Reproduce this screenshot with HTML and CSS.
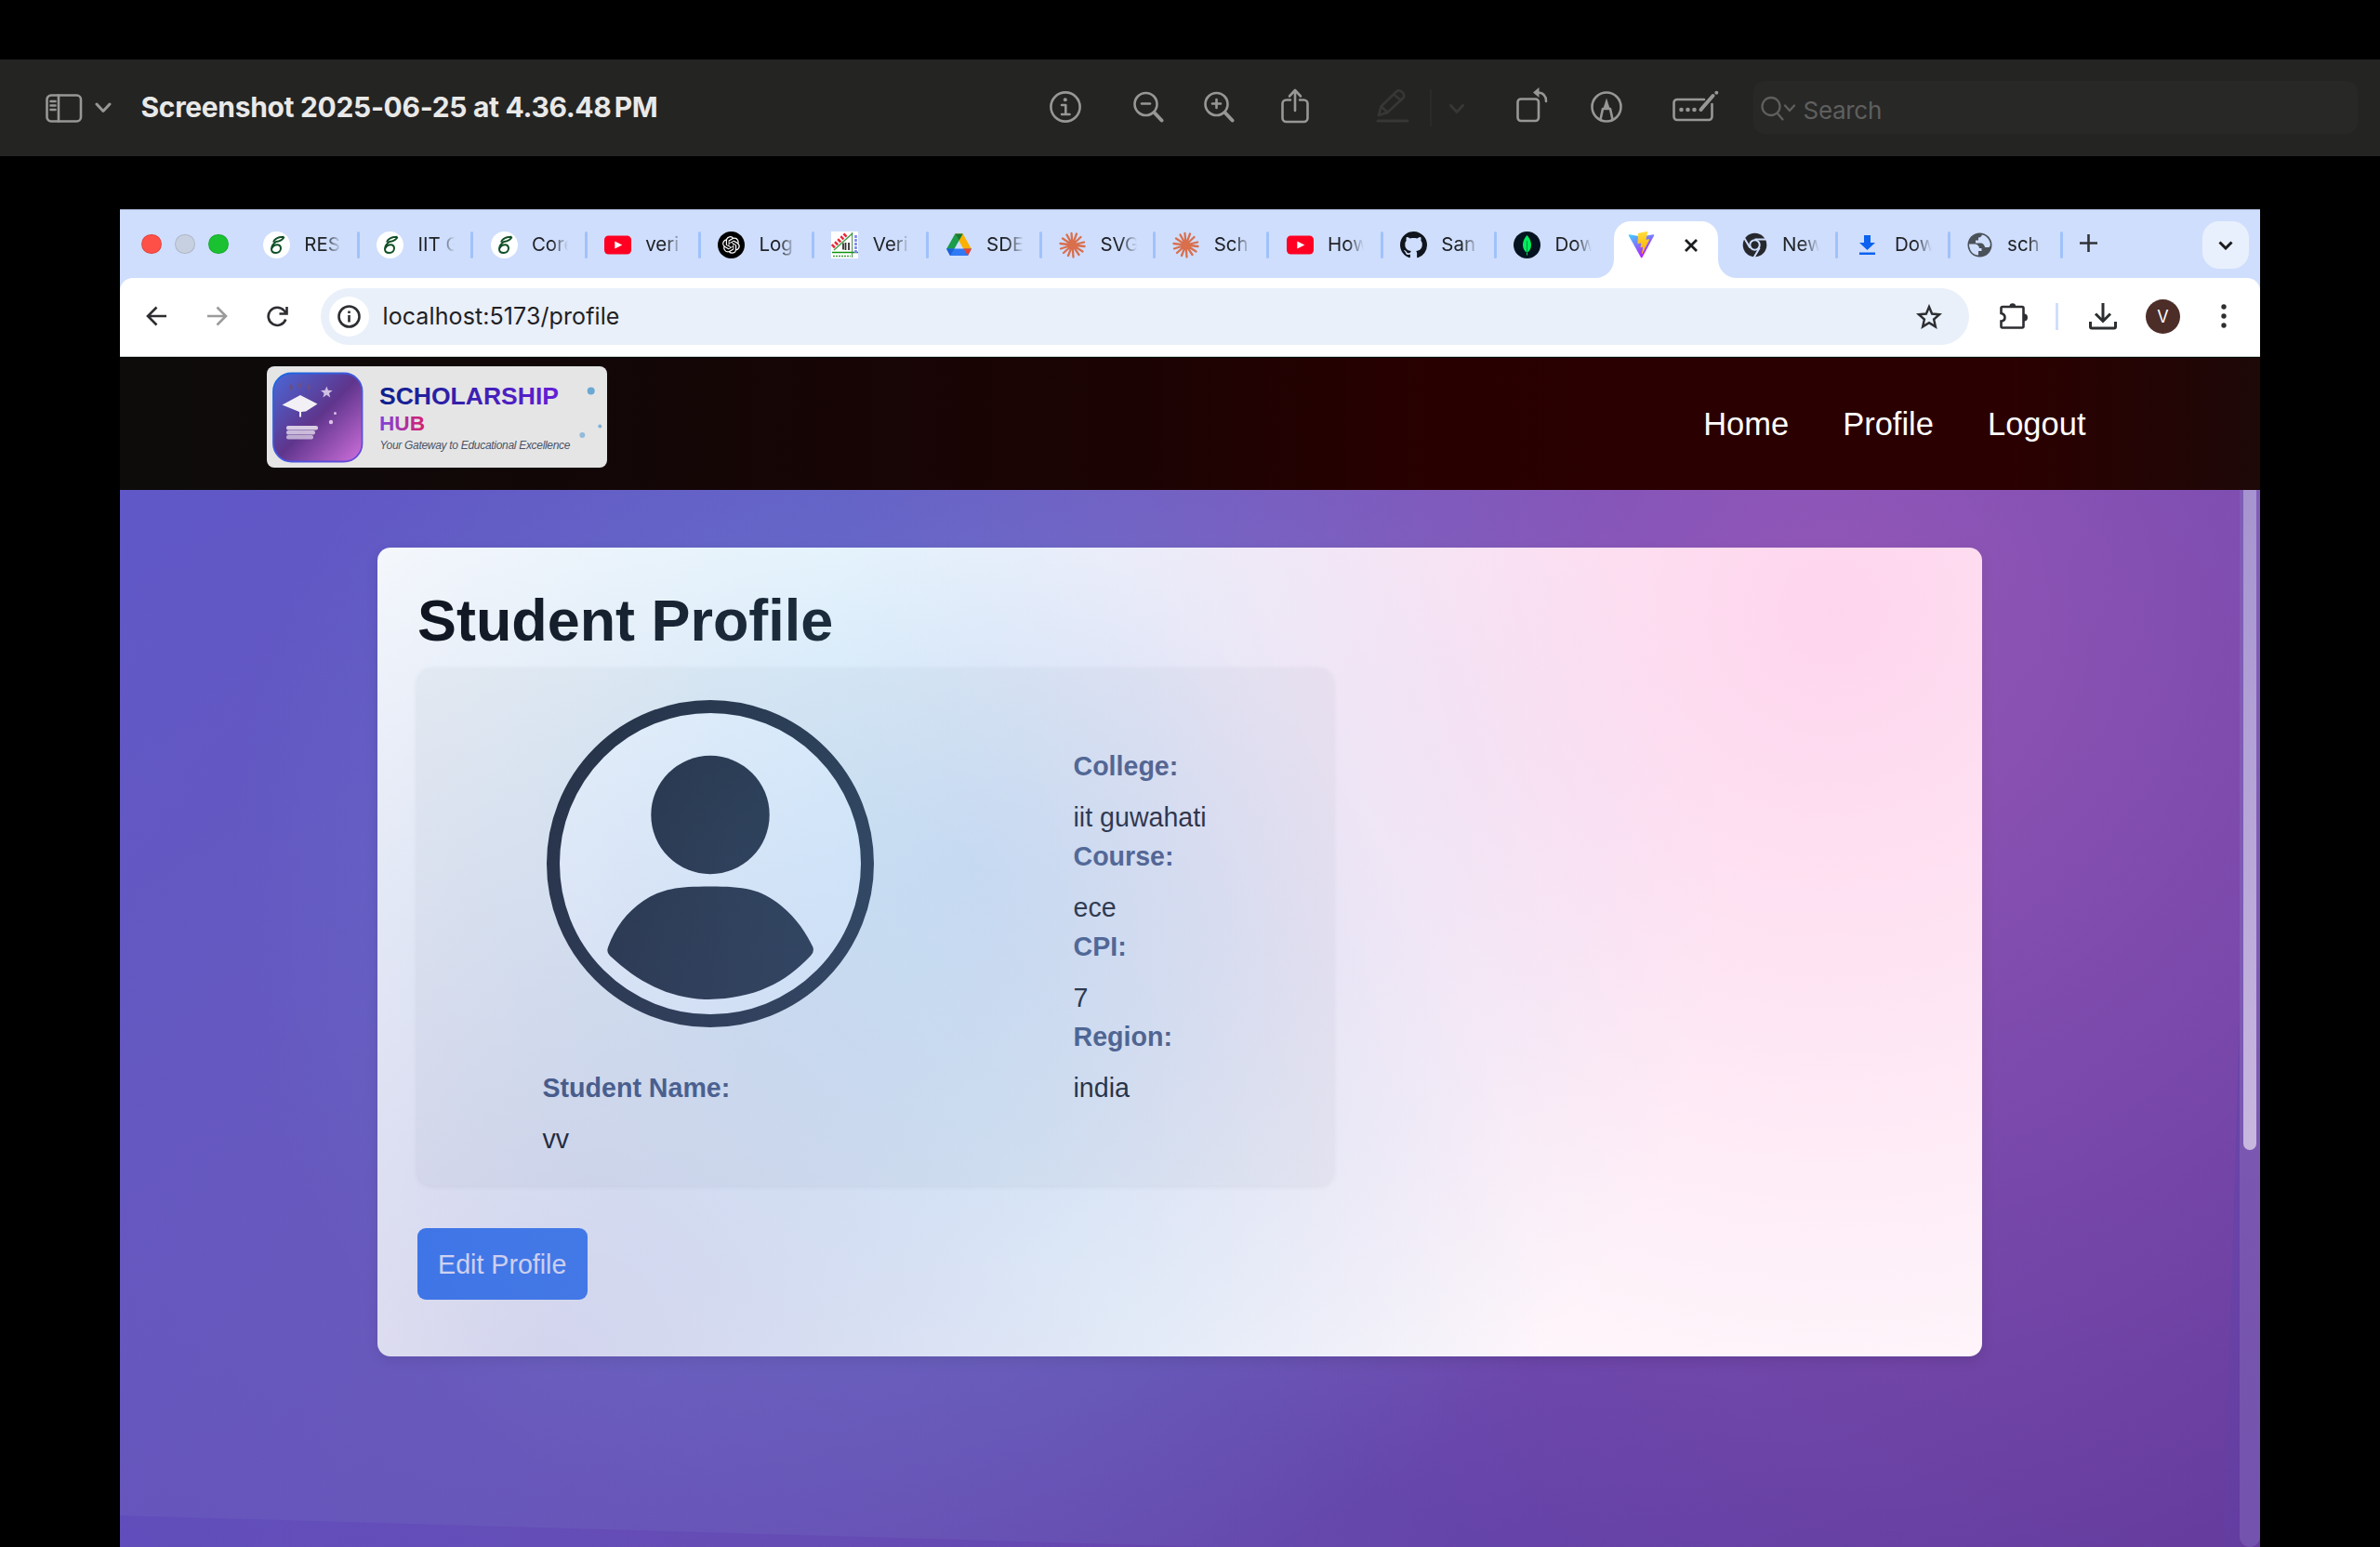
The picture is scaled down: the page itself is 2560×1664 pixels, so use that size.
FILE: index.html
```html
<!DOCTYPE html>
<html lang="en">
<head>
<meta charset="utf-8">
<title>Student Profile</title>
<link rel="stylesheet" href="styles.css">
</head>
<body>
<svg class="defs" width="0" height="0" aria-hidden="true">
  <defs>
    <symbol id="leaf" viewBox="0 0 29 29"><circle cx="14.500" cy="14.500" r="14.500" fill="#fff"/><path d="M22.500 5.800C21 9.500 17.500 10.500 14 11c-3 2-5 4.500-5 7.700 0 2.800 2 4.300 4.700 4.300 3.300 0 5.300-2.300 5.300-4.900 0-2.300-1.600-3.900-3.700-3.900-2.700 0-4.800 1.600-5.800 3.800M11 11.500c1.500-4 5.500-5.700 11.500-5.700" fill="none" stroke="#0f4f26" stroke-width="2"/></symbol>
    <symbol id="yt" viewBox="0 0 29 29"><rect y="4.500" width="29" height="20" rx="4.500" fill="#ff0022"/><path d="M11.300 10.500l8 4-8 4z" fill="#fff"/></symbol>
    <symbol id="burst" viewBox="0 0 29 29"><g stroke="#d96f4c" stroke-width="2.300" stroke-linecap="round"><path d="M14.500 14.500L13.500 2M14.500 14.500L19 2.500M14.500 14.500L23.500 6M14.500 14.500L27 11.500M14.500 14.500L27.500 16M14.500 14.500L25.500 21.500M14.500 14.500L21.500 25M14.500 14.500L15.500 27.500M14.500 14.500L10 26M14.500 14.500L5 23M14.500 14.500L2 18.500M14.500 14.500L1.500 13M14.500 14.500L4 7.500M14.500 14.500L8.500 3.500"/></g><circle cx="14.500" cy="14.500" r="4" fill="#d96f4c"/></symbol>
  </defs>
</svg>

<header class="preview-bar">
  <svg class="ic i-side" width="40" height="31" viewBox="0 0 40 31"><rect x="1.500" y="1.500" width="36.500" height="28" rx="4.500"/><path d="M14 1.500v28M5.500 8h5M5.500 12.500h5M5.500 17h5"/></svg>
  <svg class="ic i-side-chev" width="18" height="12" viewBox="0 0 18 12"><path d="M2 2l7 7.500L16 2" stroke-width="3"/></svg>
  <h1 class="preview-title">Screenshot 2025-06-25 at 4.36.48<span class="thin"> </span>PM</h1>
  <svg class="ic i-info" width="34" height="34" viewBox="0 0 34 34"><circle cx="17" cy="17" r="15.600"/><path d="M13 15h4.300v10M13 25h8.500"/><circle cx="16.800" cy="9.300" r="2" class="solid"/></svg>
  <svg class="ic i-zout" width="34" height="34" viewBox="0 0 34 34"><circle cx="13.500" cy="14" r="12"/><path d="M9 13.500h9"/><path d="M22.500 23l8 8.500" stroke-width="4"/></svg>
  <svg class="ic i-zin" width="34" height="34" viewBox="0 0 34 34"><circle cx="13.500" cy="14" r="12"/><path d="M9 13.500h9M13.500 9v9"/><path d="M22.500 23l8 8.500" stroke-width="4"/></svg>
  <svg class="ic i-share" width="30" height="38" viewBox="0 0 30 38"><path d="M10 12.500H5.500a4 4 0 0 0-4 4V32a4 4 0 0 0 4 4h19a4 4 0 0 0 4-4V16.500a4 4 0 0 0-4-4H20M15 24V2.500M9 8.500l6-6.500 6 6.500"/></svg>
  <svg class="ic dim i-pen" width="36" height="37" viewBox="0 0 36 37"><path d="M3 29l2.500-9.500L21.500 4q2.500-3 6-.5t2.500 6L12.500 26zM19 6.500l8 6.500M5.500 19.500l7 6.500"/><path d="M2 35h32" stroke-width="3"/></svg>
  <span class="bar-rule"></span>
  <svg class="ic dim i-pen-chev" width="16" height="11" viewBox="0 0 16 11"><path d="M1.500 1.500L8 8.500l6.500-7" stroke-width="3"/></svg>
  <svg class="ic i-rot" width="34" height="38" viewBox="0 0 34 38"><rect x="1.500" y="12.500" width="22.500" height="23.500" rx="3.500"/><path d="M32 15c0-6-3-9-8-9.500"/><path d="M24.500 0v11L18 5.500z" class="solid"/></svg>
  <svg class="ic i-mark" width="34" height="34" viewBox="0 0 34 34"><circle cx="17" cy="17" r="15.500"/><path d="M10.500 30.500L13 19h8l2.500 11.500"/><path d="M17 7.500L13 20h8z" class="solid"/></svg>
  <svg class="ic i-form" width="50" height="34" viewBox="0 0 50 34"><path d="M34 10H5a3.500 3.500 0 0 0-3.500 3.500v15A3.500 3.500 0 0 0 5 32h34a3.500 3.500 0 0 0 3.500-3.500V15"/><path d="M43.500 6L33 18l-2.500 3" stroke-width="4"/><circle cx="47.300" cy="2.700" r="2" class="solid"/><circle cx="9.500" cy="21" r="2.300" class="solid"/><circle cx="16.500" cy="21" r="2.300" class="solid"/><circle cx="23.500" cy="21" r="2.300" class="solid"/></svg>
  <div class="search">
    <svg class="ic" width="38" height="28" viewBox="0 0 38 28"><circle cx="11" cy="11.500" r="9.500"/><path d="M17.500 18.500l6 7M26 10.500l5 5.500 5-5.500"/></svg>
    <span>Search</span>
  </div>
</header>

<main class="window">
  <div class="tabs">
    <div class="lights"><i class="red"></i><i class="grey"></i><i class="green"></i></div>
    <div class="tab"><svg><use href="#leaf"/></svg><span>RES</span><b></b></div>
    <div class="tab"><svg><use href="#leaf"/></svg><span>IIT G</span><b></b></div>
    <div class="tab"><svg><use href="#leaf"/></svg><span>Core</span><b></b></div>
    <div class="tab"><svg><use href="#yt"/></svg><span>veri</span><b></b></div>
    <div class="tab"><svg viewBox="0 0 29 29"><circle cx="14.500" cy="14.500" r="14.500"/><path transform="translate(5.100 5.100) scale(.78)" fill="#fff" d="M22.2819 9.8211a5.9847 5.9847 0 0 0-.5157-4.9108 6.0462 6.0462 0 0 0-6.5098-2.9A6.0651 6.0651 0 0 0 4.9807 4.1818a5.9847 5.9847 0 0 0-3.9977 2.9 6.0462 6.0462 0 0 0 .7427 7.0966 5.98 5.98 0 0 0 .511 4.9107 6.051 6.051 0 0 0 6.5146 2.9001A5.9847 5.9847 0 0 0 13.2599 24a6.0557 6.0557 0 0 0 5.7718-4.2058 5.9894 5.9894 0 0 0 3.9977-2.9001 6.0557 6.0557 0 0 0-.7475-7.0729zm-9.022 12.6081a4.4755 4.4755 0 0 1-2.8764-1.0408l.1419-.0804 4.7783-2.7582a.7948.7948 0 0 0 .3927-.6813v-6.7369l2.02 1.1686a.071.071 0 0 1 .038.052v5.5826a4.504 4.504 0 0 1-4.4945 4.4944zm-9.6607-4.1254a4.4708 4.4708 0 0 1-.5346-3.0137l.142.0852 4.783 2.7582a.7712.7712 0 0 0 .7806 0l5.8428-3.3685v2.3324a.0804.0804 0 0 1-.0332.0615L9.74 19.9502a4.4992 4.4992 0 0 1-6.1408-1.6464zM2.3408 7.8956a4.485 4.485 0 0 1 2.3655-1.9728V11.6a.7664.7664 0 0 0 .3879.6765l5.8144 3.3543-2.0201 1.1685a.0757.0757 0 0 1-.071 0l-4.8303-2.7865A4.504 4.504 0 0 1 2.3408 7.872zm16.5963 3.8558L13.1038 8.364 15.1192 7.2a.0757.0757 0 0 1 .071 0l4.8303 2.7913a4.4944 4.4944 0 0 1-.6765 8.1042v-5.6772a.79.79 0 0 0-.407-.667zm2.0107-3.0231l-.142-.0852-4.7735-2.7818a.7759.7759 0 0 0-.7854 0L9.409 9.2297V6.8974a.0662.0662 0 0 1 .0284-.0615l4.8303-2.7866a4.4992 4.4992 0 0 1 6.6802 4.66zM8.3065 12.863l-2.02-1.1638a.0804.0804 0 0 1-.038-.0567V6.0742a4.4992 4.4992 0 0 1 7.3757-3.4537l-.142.0805L8.704 5.459a.7948.7948 0 0 0-.3927.6813zm1.0976-2.3654l2.602-1.4998 2.6069 1.4998v2.9994l-2.5974 1.4997-2.6067-1.4997Z"/></svg><span>Log</span><b></b></div>
    <div class="tab"><svg viewBox="0 0 29 29"><rect width="29" height="29" fill="#fff"/><path d="M3 20L23 2" stroke="#4aa04a" stroke-width="1.500"/><path d="M1.500 16.500L16 3" stroke="#e8283a" stroke-width="4.500" stroke-dasharray="2.500 1.800"/><path d="M1 22.500h28" stroke="#0b920b" stroke-width="1.500"/><path d="M2 26.500h19" stroke="#3c9a3c" stroke-width="1.700" stroke-dasharray="2 1"/><path d="M22.700 1v27" stroke="#448044" stroke-width="1"/><path d="M26.500 4v19" stroke="#7a86f0" stroke-width="2.600" stroke-dasharray="3 1"/><path d="M13 12.500v7M15.500 12v8M19 12v8" stroke="#333" stroke-width="1.800"/></svg><span>Veri</span><b></b></div>
    <div class="tab"><svg viewBox="0 0 29 29"><path d="M10.300 2.500h8.400L9.300 19H1z" fill="#1a9c4b"/><path d="M10.300 2.500h8.400l9.300 16.500h-8.500z" fill="#fbb003"/><path d="M10.300 2.500L14.500 10l4.200-7.500z" fill="#137a38"/><path d="M1 18.500h27l-4 7.500H5z" fill="#3079f5"/><path d="M1 18.500h8.500L5 26z" fill="#1c62d8"/><path d="M19.500 18.500H28L24 26z" fill="#e94335"/></svg><span>SDE</span><b></b></div>
    <div class="tab"><svg><use href="#burst"/></svg><span>SVG</span><b></b></div>
    <div class="tab"><svg><use href="#burst"/></svg><span>Sch</span><b></b></div>
    <div class="tab"><svg><use href="#yt"/></svg><span>How</span><b></b></div>
    <div class="tab"><svg viewBox="0 0 16 16"><path fill="#10141c" d="M8 0C3.580 0 0 3.580 0 8c0 3.540 2.290 6.530 5.470 7.590.4.070.55-.17.55-.38 0-.19-.01-.82-.01-1.490-2.010.37-2.530-.49-2.690-.94-.09-.23-.48-.94-.82-1.130-.28-.15-.68-.52-.01-.53.63-.01 1.080.58 1.230.82.720 1.210 1.870.87 2.330.66.070-.52.280-.87.510-1.070-1.780-.2-3.640-.89-3.640-3.950 0-.87.310-1.590.82-2.150-.08-.2-.36-1.020.08-2.120 0 0 .67-.21 2.200.82.640-.18 1.320-.27 2-.27s1.360.09 2 .27c1.530-1.040 2.200-.82 2.200-.82.440 1.100.160 1.920.08 2.120.510.56.820 1.270.820 2.150 0 3.070-1.870 3.750-3.650 3.950.290.250.540.730.540 1.480 0 1.070-.01 1.930-.01 2.200 0 .210.150.460.550.380A8.010 8.010 0 0 0 16 8c0-4.420-3.580-8-8-8z"/></svg><span>San</span><b></b></div>
    <div class="tab last"><svg viewBox="0 0 29 29"><circle cx="14.500" cy="14.500" r="14.500" fill="#051320"/><path d="M14.500 4c3 3.500 4.500 6.500 4.500 10.500s-2 6.500-4 8v3h-1v-3c-2-1.500-4-4-4-8S11.500 7.500 14.500 4z" fill="#00ed5c"/><path d="M14.500 10v13" stroke="#07913e"/></svg><span>Dow</span></div>
    <div class="tab-active">
      <svg class="flare" width="20" height="20" viewBox="0 0 20 20"><path d="M20 0v20H0A20 20 0 0 0 20 0z"/></svg>
      <svg class="flare r" width="20" height="20" viewBox="0 0 20 20"><path d="M0 0v20h20A20 20 0 0 1 0 0z"/></svg>
      <svg width="29" height="29" viewBox="0 0 32 32"><defs><linearGradient id="va" x1="0" y1="0" x2=".6" y2="1"><stop offset="0" stop-color="#41d1ff"/><stop offset="1" stop-color="#bd10fe"/></linearGradient><linearGradient id="vb" x1="0" y1="0" x2="0" y2="1"><stop offset="0" stop-color="#ffdf3a"/><stop offset="1" stop-color="#ffa800"/></linearGradient></defs><path d="M31 5L17 31q-.8 1-1.500 0L1 5q-.6-1.500 1-1.300l14 2.500 14-2.500q1.500 0 1 1.300z" fill="url(#va)"/><path d="M22.800 0L12.700 2q-.5 0-.5.600l-.7 11.300q0 .8.700.6l2.900-.7q.8 0 .6.700L14.900 18.500q-.2.700.6.600l1.700-.5q.7-.1.600.7l-1.400 6.500q0 1 .8.300l8.300-16.400q.3-.8-.5-.7l-2.900.6q-.7 0-.6-.7L23.500.700q.1-.7-.7-.7z" fill="url(#vb)"/></svg>
      <svg class="close" width="14" height="14" viewBox="0 0 14 14"><path d="M1 1l12 12M13 1L1 13"/></svg>
    </div>
    <div class="tab n"><svg viewBox="0 0 29 29"><circle cx="14.500" cy="14.500" r="12.800" fill="#26282d"/><circle cx="14.500" cy="14.500" r="5.200" fill="#26282d" stroke="#cfdefd" stroke-width="2"/><path d="M14.500 8.500h12M9.300 17.500L3.300 7.200M19.700 17.500l-6 10.300" stroke="#cfdefd" stroke-width="2"/></svg><span>New</span><b></b></div>
    <div class="tab n"><svg viewBox="0 0 29 29"><path d="M11 4h7v8h5l-8.500 8L6 12h5zM6 22.500h17v2.500H6z" fill="#0b62f0"/></svg><span>Dow</span><b></b></div>
    <div class="tab n"><svg viewBox="0 0 29 29"><circle cx="14.500" cy="14.500" r="13" fill="#4b5159"/><path d="M3 13.500h6.500q4 .5 4.500 4.500h2.500v3H13v4.500C7 25.500 3 20 3 13.500zM17 3.500q-1 3-4 3v3h-3v3h6.500q3 1 3.500 4.500h4.500q2-2 1-5c-1-4-4-7.500-8.500-8.500z" fill="#cfdefd"/></svg><span>sch</span><b></b></div>
    <svg class="plus" width="19" height="19" viewBox="0 0 19 19"><path d="M9.500 0v19M0 9.500h19"/></svg>
    <div class="drop"><svg width="16" height="10" viewBox="0 0 16 10"><path d="M1.500 1.500L8 8l6.500-6.500"/></svg></div>
  </div>

  <div class="urlbar">
    <svg class="u u-back" width="23" height="22" viewBox="0 0 23 22"><path d="M22 11H2M11.500 1.500L2 11l9.500 9.500"/></svg>
    <svg class="u u-fwd" width="23" height="22" viewBox="0 0 23 22"><path d="M1 11h20M11.500 1.500L21 11l-9.500 9.500"/></svg>
    <svg class="u u-rel" width="23" height="23" viewBox="0 0 23 23"><path d="M20.300 14.500A9.600 9.600 0 1 1 18.500 5l2.500 3M21.500 1v7.500h-8"/></svg>
    <div class="address">
      <span class="site"><svg class="u" width="25" height="25" viewBox="0 0 25 25"><circle cx="12.500" cy="12.500" r="11"/><path d="M12.500 11v7.500M12.500 6.500v2.600"/></svg></span>
      <span class="url">localhost:5173/profile</span>
      <svg class="u star" width="28" height="27" viewBox="0 0 28 27"><path d="M14 3l3.100 7.500 8.100.7-6.100 5.300 1.800 7.900L14 20.200l-6.900 4.200 1.800-7.900-6.100-5.300 8.100-.7z" stroke-width="2.400"/></svg>
    </div>
    <svg class="u u-ext" width="30" height="30" viewBox="0 0 30 30"><path d="M3 5h21q1.500 0 1.500 1.500V26q0 1.500-1.500 1.500H3q-1.500 0-1.500-1.500v-5.500q4-.5 4-4t-4-4.500V6.500Q1.500 5 3 5z"/><path d="M10.500 4.500a3.300 3.300 0 0 1 6.600 0zM26 12.500a3.500 3.500 0 0 1 0 8z" class="dark"/></svg>
    <span class="u-rule"></span>
    <svg class="u u-dl" width="30" height="30" viewBox="0 0 30 30"><path d="M15 1v19M7 12.500l8 8 8-8M1.500 21v5.500Q1.500 28 3 28h24q1.500 0 1.500-1.500V21"/></svg>
    <span class="me">V</span>
    <svg class="u-dots" width="6" height="26" viewBox="0 0 6 26"><circle cx="3" cy="3" r="2.700"/><circle cx="3" cy="13" r="2.700"/><circle cx="3" cy="23" r="2.700"/></svg>
  </div>

  <nav class="site-nav">
    <svg class="logo" width="366" height="109" viewBox="0 0 366 109">
      <defs>
        <linearGradient id="lg" x1="0" y1="0" x2="1" y2="1"><stop offset="0" stop-color="#4a68d8"/><stop offset=".5" stop-color="#5f358c"/><stop offset="1" stop-color="#d070dc"/></linearGradient>
        <linearGradient id="lb" x1="0" y1="0" x2="1" y2="1"><stop offset="0" stop-color="#1668e0"/><stop offset="1" stop-color="#6a48d8"/></linearGradient>
        <linearGradient id="lt"><stop offset="0" stop-color="#0d218c"/><stop offset="1" stop-color="#641fd6"/></linearGradient>
        <linearGradient id="lh"><stop offset="0" stop-color="#7c45dc"/><stop offset="1" stop-color="#d6206c"/></linearGradient>
      </defs>
      <rect width="366" height="109" rx="8" fill="#e6e5e5"/>
      <rect x="7" y="7.500" width="95.500" height="95" rx="19.500" fill="url(#lg)" stroke="url(#lb)" stroke-width="1.800"/>
      <path d="M16.500 41.500L36 31l18.500 9.500L42 48.500 37 49v5.500h-2V49z" fill="#f2f0f4"/>
      <path d="M26 18l2 4.500-2 4.500-2-4.500zM35.500 16l2 4.500-2 4.500-2-4.500zM45 18l2 4.500-2 4.500-2-4.500z" fill="#6a4f86"/>
      <path d="M64.300 21.500l1.700 4.300 4.600.2-3.600 2.900 1.200 4.500-3.900-2.600-3.900 2.600 1.200-4.500-3.600-2.900 4.600-.2z" fill="#cfc0e4"/>
      <circle cx="73.500" cy="50.500" r="1.500" fill="#d8c0e4"/><circle cx="69" cy="60" r="2.200" fill="#dcc2e6"/>
      <g fill="#d9cde4"><rect x="21" y="64" width="34" height="4.500" rx="2"/><rect x="21" y="69" width="31" height="4.500" rx="2" opacity=".88"/><rect x="21" y="74" width="29" height="4.500" rx="2" opacity=".78"/></g>
      <text x="121" y="40.500" font-size="26.500" font-weight="700" textLength="193" fill="url(#lt)">SCHOLARSHIP</text>
      <text x="121" y="69" font-size="22.600" font-weight="700" textLength="49" fill="url(#lh)">HUB</text>
      <text x="121.500" y="88.500" font-size="12" font-style="italic" textLength="205" fill="#4a5468">Your Gateway to Educational Excellence</text>
      <circle cx="348.700" cy="26.500" r="4" fill="#6ba8d4"/><circle cx="358.300" cy="64.500" r="2" fill="#7fb2d8"/><circle cx="339.300" cy="74" r="3" fill="#94bbda"/>
    </svg>
    <div class="links"><a>Home</a><a>Profile</a><a>Logout</a></div>
  </nav>

  <div class="page">
    <section class="card">
      <h2>Student Profile</h2>
      <div class="details">
        <div class="col">
          <svg class="avatar" width="352" height="352" viewBox="0 0 352 352"><g fill="#10131e"><circle cx="176" cy="176" r="169" fill="#fff" stroke="#10131e" stroke-width="14"/><circle cx="176" cy="123.500" r="63.700"/><path d="M176 200.500C212 200.500 230 203 252 221C270 236 280 252 286.500 266Q288 271 284 275C256 305 222 322 170 322C130 320 98 303 68 275Q64 271 66 266C73 246 86 228 104 216C124 203 140 200.500 176 200.500z"/></g></svg>
          <dl class="name"><dt>Student Name:</dt><dd>vv</dd></dl>
        </div>
        <dl class="facts"><dt>College:</dt><dd>iit guwahati</dd><dt>Course:</dt><dd>ece</dd><dt>CPI:</dt><dd>7</dd><dt>Region:</dt><dd>india</dd></dl>
      </div>
      <button class="edit">Edit Profile</button>
    </section>
    <div class="glow"></div>
    <div class="wedge"></div>
    <div class="edge"></div>
    <div class="scroll"><i></i></div>
  </div>
</main>
</body>
</html>
```
FILE: styles.css
```css
* { box-sizing: border-box; }
body {
  margin: 0;
  width: 2560px;
  height: 1664px;
  padding-top: 64px;
  overflow: hidden;
  background: #000;
  font-family: "Liberation Sans", Arial, sans-serif;
}
svg { display: block; flex: none; }
.defs { position: absolute; }

/* Preview toolbar */
.preview-bar {
  display: flex;
  align-items: flex-start;
  height: 104px;
  padding-left: 48.5px;
  background: #242423;
  font-family: Inter, "Liberation Sans", sans-serif;
}
.ic { fill: none; stroke: #979795; stroke-width: 2.6; stroke-linecap: round; stroke-linejoin: round; }
.ic .solid { fill: #979795; stroke: none; }
.ic.dim { stroke: #373736; }
.i-side { margin-top: 36.5px; }
.i-side-chev { margin: 46px 0 0 13px; }
.preview-title {
  width: 557px;
  margin: 31px 0 0 32px;
  font-size: 30px;
  line-height: 40px;
  font-weight: 650;
  letter-spacing: -0.33px;
  white-space: nowrap;
  color: #e9e9e8;
}
.thin { letter-spacing: -4px; }
.i-info { margin: 34px 0 0 420.5px; }
.i-zout { margin: 34px 0 0 55.5px; }
.i-zin { margin: 34px 0 0 42px; }
.i-share { margin: 31px 0 0 49px; }
.i-pen { margin: 31px 0 0 72px; }
.bar-rule { width: 2px; height: 40px; margin: 32px 0 0 22px; background: #2b2b2a; }
.i-pen-chev { margin: 47.5px 0 0 19px; }
.i-rot { margin: 30px 0 0 56px; }
.i-mark { margin: 34px 0 0 46px; }
.i-form { margin: 33px 0 0 54.5px; }
.search {
  display: flex;
  width: 650px;
  height: 57px;
  margin: 23px 0 0 37px;
  padding: 16px 0 0 8px;
  border-radius: 12px;
  background: #282827;
  color: #5f5f5e;
  font-size: 26px;
  line-height: 32px;
}
.search .ic { stroke: #5f5f5e; stroke-width: 2.3; }
.search span { margin: 0 0 0 7.5px; letter-spacing: -0.3px; }

/* Browser window */
.window { width: 2302px; height: 1439px; margin: 57px 0 0 129px; overflow: hidden; background: #fff; }
.tabs {
  display: flex;
  align-items: flex-start;
  height: 74px;
  border-top: 1px solid #a9b7d4;
  background: #cfdefd;
  font: 20.5px/28px Inter, "Liberation Sans", sans-serif;
  color: #202226;
}
.lights { display: flex; gap: 14.5px; width: 154px; padding: 25.5px 0 0 23px; }
.lights i { width: 21.5px; height: 21.5px; border-radius: 50%; border: 1px solid rgba(0,0,0,.12); }
.red { background: #ff5048; }
.grey { background: #c7d0e0; }
.green { background: #1ac231; }
.tab { display: flex; flex: none; width: 122.3px; padding-top: 23px; }
.tab svg { width: 29px; height: 29px; }
.tab span {
  width: 39.5px;
  height: 28px;
  margin-left: 15.3px;
  overflow: hidden;
  white-space: nowrap;
  -webkit-mask-image: linear-gradient(90deg, #000 55%, transparent 100%);
  mask-image: linear-gradient(90deg, #000 55%, transparent 100%);
}
.tab b { width: 3px; height: 29px; margin-left: 17.3px; border-radius: 2px; background: #a0c2fb; }
.tab.last { width: 108px; }
.tab.n { width: 121px; }
.tab-active {
  position: relative;
  display: flex;
  flex: none;
  width: 111.5px;
  height: 61px;
  margin: 12px 25px 0 0;
  padding: 11px 0 0 14.5px;
  border-radius: 18px 18px 0 0;
  background: #fff;
}
.flare { position: absolute; left: -20px; bottom: 0; fill: #fff; }
.flare.r { left: auto; right: -20px; }
.close { margin: 8px 0 0 32px; stroke: #1b1c1e; stroke-width: 2.8; }
.plus { margin: 26px 0 0 1.5px; stroke: #303338; stroke-width: 2.6; }
.drop { display: flex; align-items: center; justify-content: center; width: 50px; height: 51px; margin: 12px 0 0 113px; border-radius: 18px; background: #e9f0fd; }
.drop svg { fill: none; stroke: #1a1b1d; stroke-width: 3; }
.urlbar {
  display: flex;
  align-items: center;
  height: 85px;
  padding: 0 0 2px 28px;
  border-bottom: 1px solid #c4ccc8;
  border-radius: 14px 14px 0 0;
  background: #fff;
  box-shadow: 0 -14px 0 #cfdefd;
}
.u { fill: none; stroke: #2c2e31; stroke-width: 2.6; }
.u .dark { fill: #2c2e31; stroke: none; }
.u-fwd { margin-left: 41.5px; stroke: #9a9b9d; }
.u-rel { margin-left: 42px; }
.address {
  display: flex;
  align-items: center;
  flex: none;
  width: 1773px;
  height: 61px;
  margin-left: 35px;
  padding-left: 9.5px;
  border-radius: 31px;
  background: #e9f0f9;
}
.site { display: flex; align-items: center; justify-content: center; width: 43px; height: 43px; border-radius: 50%; background: #fff; }
.url { width: 1649px; margin-left: 14.5px; font: 25px/34px Inter, "Liberation Sans", sans-serif; letter-spacing: 0.1px; color: #1f2124; }
.u-ext { margin-left: 33px; }
.u-rule { width: 3px; height: 29px; margin-left: 30.5px; background: #cfdffb; }
.u-dl { margin-left: 32.5px; stroke-width: 3; }
.me { width: 37px; height: 37px; margin-left: 31.5px; border-radius: 50%; background: #4c2d28; color: #fff; font: 18px/37px Inter, sans-serif; text-align: center; }
.u-dots { margin-left: 43.5px; fill: #2c2e31; }

/* Site header */
.site-nav {
  display: flex;
  align-items: center;
  justify-content: space-between;
  height: 143px;
  padding: 0 187.5px 0 158px;
  border-top: 1px solid #000;
  background: linear-gradient(90deg, #0d0c0b 0, #120707 20%, #1c0303 48%, #290000 62%, #2b0000 88%, #1e0808 100%);
}
.logo { margin-bottom: 16px; font-family: "Liberation Sans", Arial, sans-serif; }
.links { display: flex; gap: 58px; margin-bottom: 1px; font-size: 34.5px; line-height: 40px; color: #fff; }

/* Profile page */
.page {
  position: relative;
  height: 1137px;
  padding: 62px 0 0 277px;
  overflow: hidden;
  background: linear-gradient(135deg, #6058c8 0%, #663c9e 100%);
}
.glow {
  position: absolute;
  left: 0;
  top: -143px;
  width: 2302px;
  height: 1370px;
  pointer-events: none;
  background:
    radial-gradient(circle at 20% 80%, rgba(120,119,198,.3) 0%, transparent 50%),
    radial-gradient(circle at 80% 20%, rgba(255,119,198,.3) 0%, transparent 50%),
    radial-gradient(circle at 40% 40%, rgba(110,200,255,.29) 0%, rgba(112,206,255,.2) 16%, rgba(118,215,255,.13) 27%, rgba(120,219,255,0) 50%);
}
.wedge {
  position: absolute;
  left: 0;
  bottom: 0;
  width: 1180px;
  height: 34px;
  background: linear-gradient(90deg, rgba(80,50,185,.22), rgba(100,50,170,.3));
  clip-path: polygon(0 0, 100% 100%, 0 100%);
}
.edge {
  position: absolute;
  right: 22px;
  top: 560px;
  width: 17px;
  height: 577px;
  background: linear-gradient(180deg, rgba(90,66,170,.5), rgba(90,66,170,.2) 90%);
  clip-path: polygon(100% 0, 100% 100%, 0 100%);
}
.scroll { position: absolute; right: 0; top: 0; width: 22px; height: 1137px; border-radius: 0 0 11px 11px; background: rgba(130,110,190,.45); }
.scroll i { display: block; width: 14.5px; height: 710px; margin-left: 3.5px; border-radius: 0 0 7px 7px; background: linear-gradient(180deg, #a594cf, #c8b8df); }
.card {
  width: 1726px;
  height: 870px;
  padding: 42.7px 0 0 43px;
  border-radius: 14px;
  background: #fefefe;
  box-shadow: 0 5px 14px rgba(0,0,0,.12);
}
.card h2 { margin: 0 0 17.3px 0; font-size: 62.9px; line-height: 70px; font-weight: 700; color: #020308; }
.details {
  display: flex;
  width: 985px;
  height: 556px;
  padding: 34px 0 0 134.5px;
  border-radius: 15px;
  background: #f4f5f5;
  box-shadow: 0 1px 6px rgba(0,0,0,.09);
}
.col { width: 571px; }
.avatar { margin-left: 4px; }
dl { margin: 0; font-size: 28.6px; line-height: 43.5px; }
dt { margin-bottom: 10px; font-weight: 700; color: #35466c; }
dd { position: relative; top: 1px; margin: 0; color: #000; }
.name { margin-top: 44.5px; }
.facts { padding-top: 50.5px; }
.edit {
  display: block;
  width: 182.5px;
  height: 76.5px;
  margin: 46.5px 0 0 0;
  padding: 2px 0 0;
  border: 0;
  border-radius: 9px;
  background: #2a72f1;
  color: #f2f0ff;
  font: 28.6px "Liberation Sans", Arial, sans-serif;
}
```
